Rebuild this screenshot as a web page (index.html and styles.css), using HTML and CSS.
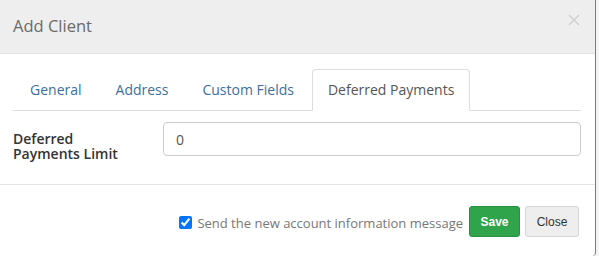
FILE: index.html
```html
<!DOCTYPE html>
<html>
<head>
<meta charset="utf-8">
<link rel="stylesheet" href="styles.css">
</head>
<body>
<div class="modal">
  <div class="modal-header">
    <h4 class="modal-title">Add Client</h4>
    <button class="close" type="button" aria-label="Close">
      <svg width="12" height="12" viewBox="0 0 12 12"><path d="M1 1 L11 11 M11 1 L1 11" stroke="#cfcfcf" stroke-width="1.4" fill="none"/></svg>
    </button>
  </div>
  <div class="modal-body">
    <ul class="nav-tabs">
      <li><a href="#">General</a></li>
      <li><a href="#">Address</a></li>
      <li><a href="#">Custom Fields</a></li>
      <li class="active"><a href="#">Deferred Payments</a></li>
    </ul>
    <div class="form-row">
      <label class="form-label">Deferred<br>Payments Limit</label>
      <input class="form-input" type="text" value="0">
    </div>
  </div>
  <div class="modal-footer">
    <label class="check"><input type="checkbox" checked> Send the new account information message</label>
    <button class="btn btn-save" type="button">Save</button>
    <button class="btn btn-close" type="button">Close</button>
  </div>
</div>
</body>
</html>
```

FILE: styles.css
```css
html, body {
  margin: 0;
  padding: 0;
  background: #f4f4f4;
}
body {
  font-family: "Open Sans", "Liberation Sans", sans-serif;
  font-size: 14px;
  color: #333;
}
.modal {
  width: 596px;
  height: 256px;
  background: #fff;
  border-right: 1px solid #7a7a7a;
  border-bottom-right-radius: 4px;
  box-sizing: border-box;
  overflow: hidden;
}
.modal-header {
  height: 53px;
  background: #eeeeee;
  border-bottom: 1px solid #e2e2e2;
  display: flex;
  align-items: center;
  justify-content: space-between;
  padding: 0 13px;
  box-sizing: content-box;
}
.modal-title {
  margin: 0;
  font-size: 16.5px;
  font-weight: 400;
  color: #6a6a6a;
  padding-bottom: 2px;
}
.close {
  background: none;
  border: 0;
  padding: 0;
  margin: 0 2px 14px 0;
  display: flex;
}
.modal-body {
  padding: 15px 14px 15px 13px;
  height: 100px;
  border-bottom: 1px solid #e5e5e5;
  box-sizing: content-box;
}
.nav-tabs {
  list-style: none;
  margin: 0;
  padding: 0 0 0 1px;
  display: flex;
  border-bottom: 1px solid #dddddd;
  height: 41px;
}
.nav-tabs li {
  margin-right: 2px;
  margin-bottom: -1px;
}
.nav-tabs a {
  display: block;
  height: 41px;
  line-height: 40px;
  padding: 0 15px;
  box-sizing: border-box;
  color: #3a6fa0;
  text-decoration: none;
  border: 1px solid transparent;
  border-radius: 4px 4px 0 0;
}
.nav-tabs .active a {
  color: #555;
  background: #fff;
  border-color: #dddddd #dddddd transparent;
  height: 42px;
}
.form-row {
  display: flex;
  align-items: flex-start;
  margin-top: 11px;
}
.form-label {
  width: 150px;
  flex: none;
  font-weight: 600;
  line-height: 15px;
  color: #333;
  padding-top: 9px;
}
.form-input {
  flex: 1;
  height: 34px;
  box-sizing: border-box;
  border: 1px solid #cccccc;
  border-radius: 4px;
  padding: 0 12px;
  font-family: "Open Sans", "Liberation Sans", sans-serif;
  font-size: 14px;
  color: #555;
}
.modal-footer {
  display: flex;
  justify-content: flex-end;
  align-items: center;
  padding: 21px 16px 0 0;
}
.check {
  display: flex;
  align-items: center;
  color: #777;
  font-size: 13px;
  margin-right: 6px;
  margin-top: 2px;
}
.check input {
  margin: 0 5px 0 0;
  width: 13px;
  height: 13px;
}
.btn {
  height: 31px;
  box-sizing: border-box;
  border-radius: 3px;
  font-family: "Liberation Sans", Arial, sans-serif;
  font-size: 12px;
  padding: 0 10px;
}
.btn-save {
  background: #2fa44a;
  border: 1px solid #27913f;
  color: #fff;
  font-weight: 700;
  width: 51px;
  margin-right: 5px;
}
.btn-close {
  background: #eeeeee;
  border: 1px solid #d5d5d5;
  color: #333;
  width: 54px;
}
```
